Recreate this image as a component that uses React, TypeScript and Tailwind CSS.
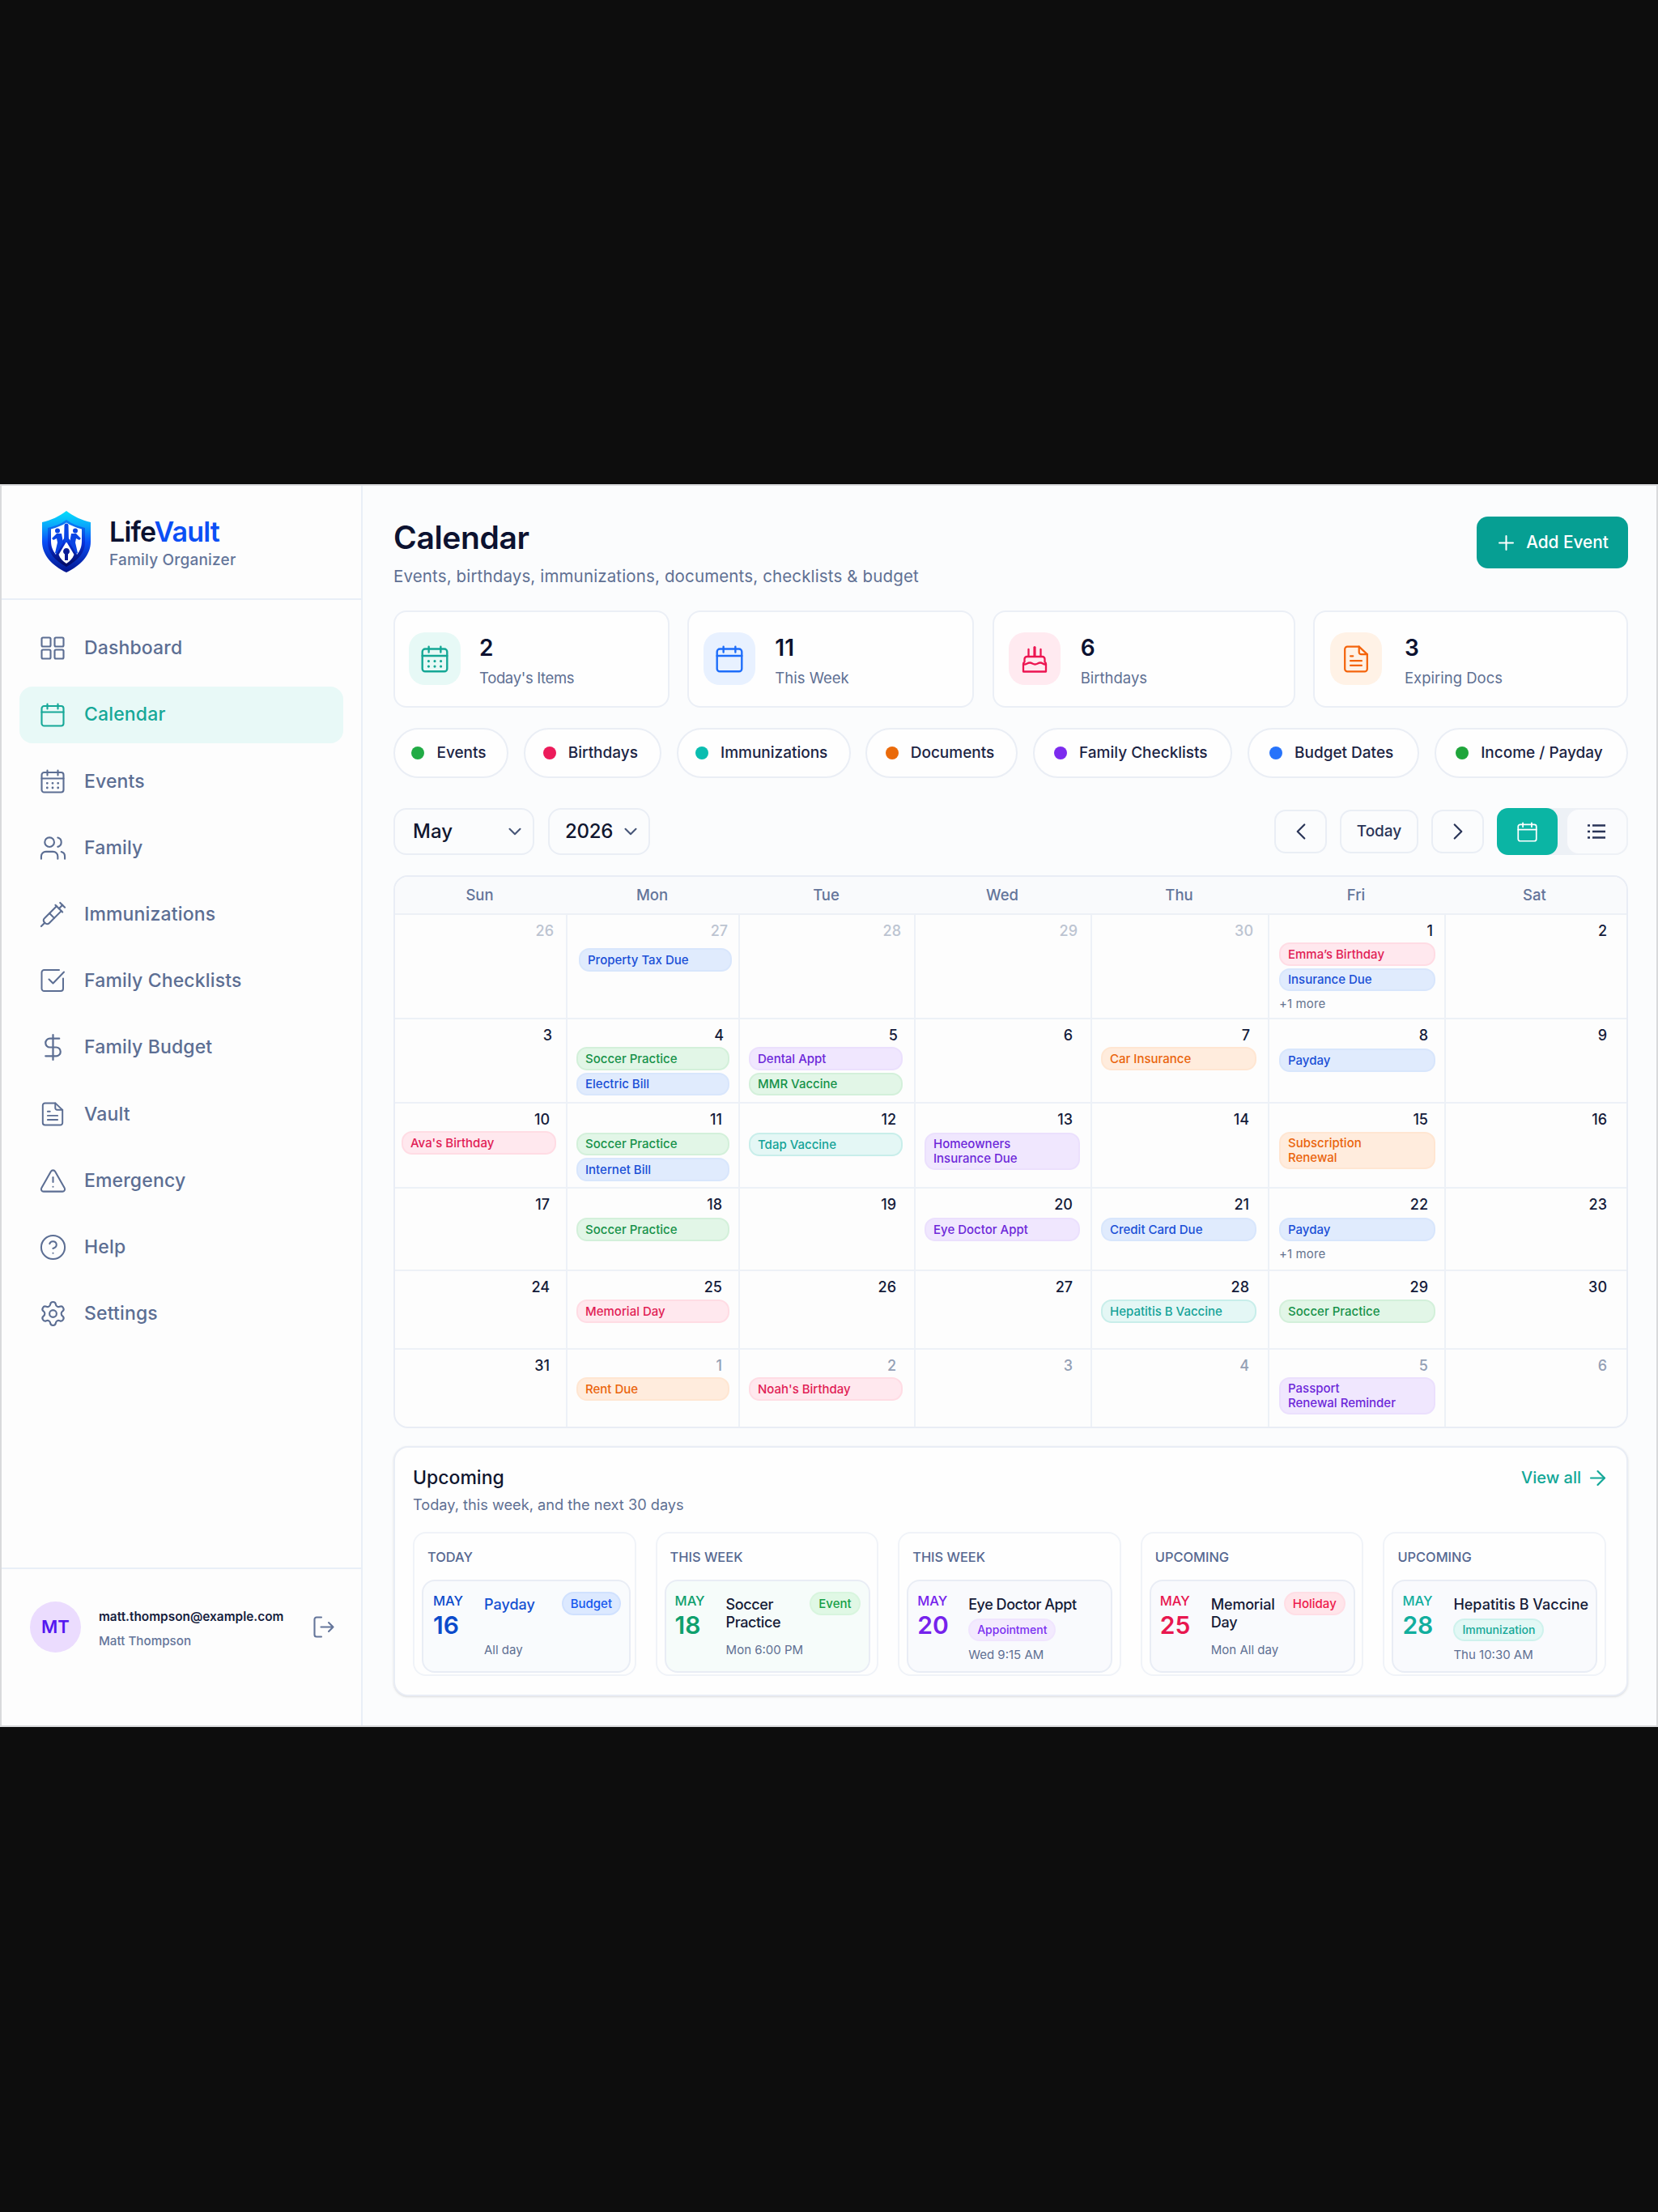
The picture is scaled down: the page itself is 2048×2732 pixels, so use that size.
import type { ReactNode } from 'react';
import {
  ArrowRight,
  ChevronDown,
  ChevronLeft,
  ChevronRight,
  CircleHelp,
  DollarSign,
  Plus,
  Settings,
  Syringe,
  TriangleAlert,
  Users,
} from 'lucide-react';

type Tone = 'blue' | 'green' | 'purple' | 'red' | 'orange' | 'teal';

const chipTones: Record<Tone, string> = {
  blue: 'bg-[#e0ebfd] border-[#d8e6fc] text-[#1a4fd6]',
  green: 'bg-[#e2f6e7] border-[#d3f0da] text-[#17924a]',
  purple: 'bg-[#f0e7fe] border-[#ebe0fd] text-[#6d28d9]',
  red: 'bg-[#ffe8ee] border-[#ffdce4] text-[#e11d55]',
  orange: 'bg-[#ffecdd] border-[#ffe6d2] text-[#ea640c]',
  teal: 'bg-[#e4f7f5] border-[#c8eeea] text-[#14a398]',
};

function CalendarGlyph({ className, dots = false }: { className?: string; dots?: boolean }) {
  return (
    <svg viewBox="0 0 30 30" fill="none" stroke="currentColor" strokeWidth="2.1" strokeLinecap="round" className={className}>
      <rect x="1.5" y="4" width="27" height="24.5" rx="3" />
      <path d="M1.5 11.5h27M8.5 1.5v6M21.5 1.5v6" />
      {dots && <path strokeWidth="2.8" d="M8.3 17.3h.01M15 17.3h.01M21.7 17.3h.01M8.3 23h.01M15 23h.01M21.7 23h.01" />}
    </svg>
  );
}

function GridGlyph({ className }: { className?: string }) {
  return (
    <svg viewBox="0 0 30 30" fill="none" stroke="currentColor" strokeWidth="2.1" className={className}>
      <rect x="1.5" y="1.5" width="11" height="11" rx="1.5" />
      <rect x="17.5" y="1.5" width="11" height="11" rx="1.5" />
      <rect x="1.5" y="16.5" width="11" height="11" rx="1.5" />
      <rect x="17.5" y="16.5" width="11" height="11" rx="1.5" />
    </svg>
  );
}

function CheckGlyph({ className }: { className?: string }) {
  return (
    <svg viewBox="0 0 30 30" fill="none" stroke="currentColor" strokeWidth="2" strokeLinecap="round" strokeLinejoin="round" className={className}>
      <path d="M23 2H4.5a3 3 0 0 0-3 3v20a3 3 0 0 0 3 3H25a3 3 0 0 0 3-3V12.5" />
      <path d="M10.500 13.5l5 5L29 4.5" />
    </svg>
  );
}

function DocGlyph({ className }: { className?: string }) {
  return (
    <svg viewBox="0 0 30 32" fill="none" stroke="currentColor" strokeWidth="2.1" strokeLinecap="round" strokeLinejoin="round" className={className}>
      <path d="M18.5 1.5H5a3 3 0 0 0-3 3v23a3 3 0 0 0 3 3h20a3 3 0 0 0 3-3V10.5z" />
      <path d="M18.5 1.5V8a2.5 2.5 0 0 0 2.5 2.5h7" />
      <path d="M8.5 12.5h3M8.5 18h13M8.5 23.5h13" />
    </svg>
  );
}

function CakeGlyph({ className }: { className?: string }) {
  return (
    <svg viewBox="0 0 32 34" fill="none" stroke="currentColor" strokeWidth="2.3" strokeLinecap="round" strokeLinejoin="round" className={className}>
      <path d="M2 32.5V23a3 3 0 0 1 1.5-2.6V17a3 3 0 0 1 3-3h19a3 3 0 0 1 3 3v3.4A3 3 0 0 1 30 23v9.5z" />
      <path d="M3 23.5c3.500 0 4-2 7-2s3.500 2 6.500 2 3.500-2 6.500-2 3 2 6 2" />
      <path strokeWidth="3.2" d="M16 2.5V13" />
      <path d="M8.500 5v8.500M23.500 5v8.500" />
    </svg>
  );
}

function LogoutGlyph({ className }: { className?: string }) {
  return (
    <svg viewBox="0 0 26 27" fill="none" stroke="currentColor" strokeWidth="2.1" strokeLinecap="round" strokeLinejoin="round" className={className}>
      <path d="M10 1.5H4A2.5 2.5 0 0 0 1.5 4v19A2.5 2.5 0 0 0 4 25.5h6M9.5 13.5h15M19 8l5.5 5.5L19 19" />
    </svg>
  );
}

function ListGlyph({ className }: { className?: string }) {
  return (
    <svg viewBox="0 0 24 20" fill="none" stroke="currentColor" strokeWidth="2.6" className={className}>
      <path d="M1 2.5h3M7 2.5h16M1 10h3M7 10h16M1 17.5h3M7 17.5h16" />
    </svg>
  );
}

function Logo() {
  return (
    <svg viewBox="0 0 62 78" className="h-[78px] w-[62px]">
      <defs>
        <linearGradient id="shield" x1="0" y1="0" x2="0" y2="1">
          <stop offset="0" stopColor="#06e0fb" />
          <stop offset="0.25" stopColor="#0aa5fb" />
          <stop offset="0.5" stopColor="#0a50f8" />
          <stop offset="1" stopColor="#04148c" />
        </linearGradient>
        <linearGradient id="shieldInner" x1="0" y1="0" x2="0" y2="1">
          <stop offset="0" stopColor="#0a86f8" />
          <stop offset="0.5" stopColor="#0830d8" />
          <stop offset="1" stopColor="#03085c" />
        </linearGradient>
      </defs>
      <path d="M31 1C22 8 12 12.5 1 15v24c0 17 13 30 30 38 17-8 30-21 30-38V15C50 12.5 40 8 31 1z" fill="url(#shield)" />
      <path d="M31 12C24 17 17 20 8 22v18c0 13 9 22 23 30 14-8 23-17 23-30V22C45 20 38 17 31 12z" fill="url(#shieldInner)" />
      {/* White field with the three figures cut into it */}
      <path d="M31 15.5c-5 3.5-12 6-19 8V38c0 7 2 12 6 17l6.5-15L31 31l6.5 9L44 55c4-5 6-10 6-17V23.500c-7-2-14-4.500-19-8z" fill="#fff" />
      <path d="M31 39l9.5 16c-2 5-5 8-9.5 11-4.5-3-7.5-6-9.5-11z" fill="#fff" />
      <g fill="#0a45e4">
        <circle cx="20" cy="25.5" r="3" />
        <circle cx="42" cy="25.5" r="3" />
        <path d="M28.5 19a2.5 2.5 0 0 1 5 0L34 40h-6z" />
        <path d="M13 35l6-6 6 0 2 11-8 14-2-1 3-13-1-5-4 2z" />
        <path d="M49 35l-6-6-6 0-2 11 8 14 2-1-3-13 1-5 4 2z" />
      </g>
      <path d="M31 47a4 4 0 0 1 2 7.4V62h-4v-7.6A4 4 0 0 1 31 47z" fill="#081a94" />
    </svg>
  );
}

const iconSize = 'h-[30px] w-[30px]';
const lucideSize = '-mx-[2.5px] h-[35px] w-[35px]';

const navItems: { label: string; icon: ReactNode; active?: boolean }[] = [
  { label: 'Dashboard', icon: <GridGlyph className={iconSize} /> },
  { label: 'Calendar', icon: <CalendarGlyph className={iconSize} />, active: true },
  { label: 'Events', icon: <CalendarGlyph dots className={iconSize} /> },
  { label: 'Family', icon: <Users className={lucideSize} strokeWidth={1.45} /> },
  { label: 'Immunizations', icon: <Syringe className={lucideSize} strokeWidth={1.45} /> },
  { label: 'Family Checklists', icon: <CheckGlyph className={iconSize} /> },
  { label: 'Family Budget', icon: <DollarSign className="-mx-[3.5px] h-[37px] w-[37px]" strokeWidth={1.45} /> },
  { label: 'Vault', icon: <DocGlyph className={iconSize} /> },
  { label: 'Emergency', icon: <TriangleAlert className={lucideSize} strokeWidth={1.4} /> },
  { label: 'Help', icon: <CircleHelp className={lucideSize} strokeWidth={1.4} /> },
  { label: 'Settings', icon: <Settings className={lucideSize} strokeWidth={1.45} /> },
];

function Sidebar() {
  return (
    <aside className="flex w-[446px] shrink-0 flex-col border-r-2 border-[#e9eff7] bg-[#fdfdfd]">
      <div className="flex h-[141px] shrink-0 items-start gap-[22px] border-b-2 border-[#e9eff7] pt-[30px] pl-[49px]">
        <Logo />
        <div className="pt-[7px]">
          <div className="text-[34px] leading-[40px] font-semibold tracking-[-0.8px] text-[#0b1130]">
            Life<span className="text-[#0b4ff5]">Vault</span>
          </div>
          <div className="mt-px text-[19px] leading-[28px] font-medium tracking-[0.2px] text-[#64759a]">Family Organizer</div>
        </div>
      </div>

      <nav className="flex flex-1 flex-col gap-[12.2px] pt-[24.5px] pr-[22px] pl-[22px]">
        {navItems.map((item) => (
          <a
            key={item.label}
            className={`flex h-[70px] items-center gap-[24px] rounded-[16px] pl-[26px] text-[23px] font-medium tracking-[0.15px] ${
              item.active ? 'bg-[#e8f9f7] text-[#16a898]' : 'text-[#5c6e93]'
            }`}
          >
            {item.icon}
            {item.label}
          </a>
        ))}
      </nav>

      <div className="flex h-[195px] shrink-0 items-start border-t-2 border-[#e9eff7] pt-[40px] pl-[35px]">
        <div className="flex h-[63px] w-[63px] shrink-0 items-center justify-center rounded-full bg-[#ebdcfe] text-[22px] font-semibold text-[#5417f0]">
          MT
        </div>
        <div className="w-[287px] shrink-0 pt-[9px] pl-[22px]">
          <div className="text-[15.4px] leading-[20px] font-semibold whitespace-nowrap text-[#161d3d]">matt.thompson@example.com</div>
          <div className="mt-[10px] text-[15.2px] leading-[20px] font-medium text-[#64759a]">Matt Thompson</div>
        </div>
        <LogoutGlyph className="mt-[18px] h-[27px] w-[26px] text-[#64759a]" />
      </div>
    </aside>
  );
}

const stats = [
  { value: '2', label: "Today's Items", box: 'w-[341px] gap-[23px] pl-[17px] tracking-[-0.35px]', tile: 'bg-[#e7f9f6] text-[#14a795]', icon: <CalendarGlyph dots className="h-[34px] w-[34px]" /> },
  { value: '11', label: 'This Week', box: 'w-[354px] gap-[24px] pl-[18px]', tile: 'bg-[#e8f1ff] text-[#1d6dfa]', icon: <CalendarGlyph className="h-[34px] w-[34px]" /> },
  { value: '6', label: 'Birthdays', box: 'w-[374px] gap-[25px] pl-[18px]', tile: 'bg-[#ffeaf0] text-[#ec1551]', icon: <CakeGlyph className="h-[34px] w-[32px]" /> },
  { value: '3', label: 'Expiring Docs', box: 'w-[389px] gap-[28px] pl-[19px]', tile: 'bg-[#fff2e6] text-[#f4640c]', icon: <DocGlyph className="h-[34px] w-[32px]" /> },
];

const filters = [
  { label: 'Events', dot: 'bg-[#21ab45]', w: 'w-[142px]' },
  { label: 'Birthdays', dot: 'bg-[#ec1b5a]', w: 'w-[170px]' },
  { label: 'Immunizations', dot: 'bg-[#0abdb0]', w: 'w-[215px]' },
  { label: 'Documents', dot: 'bg-[#ea6a0a]', w: 'w-[188px]' },
  { label: 'Family Checklists', dot: 'bg-[#7c2bee]', w: 'w-[246px]' },
  { label: 'Budget Dates', dot: 'bg-[#2673fb]', w: 'w-[212px]' },
  { label: 'Income / Payday', dot: 'bg-[#1fa53b]', w: 'w-[239px]' },
];

// Right padding of the day number: first week, second week, the others
const columns = [
  { day: 'Sun', pl: 'pl-2', num: ['pr-[15px]', 'pr-[17px]', 'pr-5'], chip: 'w-[191px]' },
  { day: 'Mon', pl: 'pl-[11px]', num: ['pr-[13px]', 'pr-[18px]', 'pr-5'], chip: 'w-[189px]' },
  { day: 'Tue', pl: 'pl-[11px]', num: ['pr-4', 'pr-[20px]', 'pr-[22px]'], chip: 'w-[190px]' },
  { day: 'Wed', pl: 'pl-[11px]', num: ['pr-4', 'pr-[22px]', 'pr-[22px]'], chip: 'w-[192px]' },
  { day: 'Thu', pl: 'pl-[11px]', num: ['pr-[18px]', 'pr-[22px]', 'pr-[23px]'], chip: 'w-[192px]' },
  { day: 'Fri', pl: 'pl-3', num: ['pr-[14px]', 'pr-5', 'pr-5'], chip: 'w-[193px]' },
  { day: 'Sat', pl: 'pl-3', num: ['pr-[24px]', 'pr-6', 'pr-6'], chip: 'w-[193px]' },
];

type Chip = [label: string, tone: Tone];
type Day = { n: number; muted?: boolean; chips?: Chip[]; more?: string; offset?: string };

const weeks: { height: string; days: Day[] }[] = [
  {
    height: 'h-[129px]',
    days: [
      { n: 26, muted: true },
      { n: 27, muted: true, chips: [['Property Tax Due', 'blue']], offset: 'pt-[11px] pl-[3px]' },
      { n: 28, muted: true },
      { n: 29, muted: true },
      { n: 30, muted: true },
      { n: 1, chips: [['Emma’s Birthday', 'red'], ['Insurance Due', 'blue']], more: '+1 more', offset: 'pt-1' },
      { n: 2 },
    ],
  },
  {
    height: 'h-[104px]',
    days: [
      { n: 3 },
      { n: 4, chips: [['Soccer Practice', 'green'], ['Electric Bill', 'blue']], offset: 'pt-1' },
      { n: 5, chips: [['Dental Appt', 'purple'], ['MMR Vaccine', 'green']], offset: 'pt-1' },
      { n: 6 },
      { n: 7, chips: [['Car Insurance', 'orange']], offset: 'pt-1' },
      { n: 8, chips: [['Payday', 'blue']], offset: 'pt-1.5' },
      { n: 9 },
    ],
  },
  {
    height: 'h-[105px]',
    days: [
      { n: 10, chips: [["Ava's Birthday", 'red']], offset: 'pt-1' },
      { n: 11, chips: [['Soccer Practice', 'green'], ['Internet Bill', 'blue']], offset: 'pt-[5.5px]' },
      { n: 12, chips: [['Tdap Vaccine', 'teal']], offset: 'pt-1.5' },
      { n: 13, chips: [['Homeowners\nInsurance Due', 'purple']], offset: 'pt-1.5' },
      { n: 14 },
      { n: 15, chips: [['Subscription\nRenewal', 'orange']], offset: 'pt-[5px]' },
      { n: 16 },
    ],
  },
  {
    height: 'h-[102px]',
    days: [
      { n: 17 },
      { n: 18, chips: [['Soccer Practice', 'green']], offset: 'pt-1.5' },
      { n: 19 },
      { n: 20, chips: [['Eye Doctor Appt', 'purple']], offset: 'pt-1.5' },
      { n: 21, chips: [['Credit Card Due', 'blue']], offset: 'pt-1.5' },
      { n: 22, chips: [['Payday', 'blue']], more: '+1 more', offset: 'pt-1.5' },
      { n: 23 },
    ],
  },
  {
    height: 'h-[97px]',
    days: [
      { n: 24 },
      { n: 25, chips: [['Memorial Day', 'red']], offset: 'pt-[5px]' },
      { n: 26 },
      { n: 27 },
      { n: 28, chips: [['Hepatitis B Vaccine', 'teal']], offset: 'pt-[5px]' },
      { n: 29, chips: [['Soccer Practice', 'green']], offset: 'pt-[5px]' },
      { n: 30 },
    ],
  },
  {
    height: 'h-[95px]',
    days: [
      { n: 31 },
      { n: 1, muted: true, chips: [['Rent Due', 'orange']], offset: 'pt-1' },
      { n: 2, muted: true, chips: [["Noah's Birthday", 'red']], offset: 'pt-1' },
      { n: 3, muted: true },
      { n: 4, muted: true },
      { n: 5, muted: true, chips: [['Passport\nRenewal Reminder', 'purple']], offset: 'pt-1' },
      { n: 6, muted: true },
    ],
  },
];

const gridCols = 'grid grid-cols-[213px_213px_217px_218px_219px_218px_223px]';

function MonthGrid() {
  return (
    <section className="mt-[25px] h-[683px] shrink-0 overflow-hidden rounded-[18px] border-2 border-[#e9edf5] bg-[#fdfdfd]">
      <div className={`${gridCols} h-[47px] border-b-2 border-[#edf0f6] bg-[#f9fafc]`}>
        {columns.map((col) => (
          <div key={col.day} className="pr-[4px] text-center text-[18.5px] leading-[45px] font-medium text-[#64759a]">
            {col.day}
          </div>
        ))}
      </div>
      {weeks.map((week, row) => (
        <div key={row} className={`${gridCols} ${week.height}`}>
          {week.days.map((day, i) => {
            const col = columns[i];
            const muted = row === 0 ? 'text-[#bcc4d1]' : 'text-[#94a0b5]';
            return (
              <div
                key={i}
                className={`border-[#edf1f7] pt-[10px] ${i < 6 ? 'border-r-2' : ''} ${row < 5 ? 'border-b-2' : ''}`}
              >
                <div
                  className={`text-right text-[18px] leading-5 font-medium ${col.num[Math.min(row, 2)]} ${
                    day.muted ? muted : 'text-[#141b3a]'
                  }`}
                >
                  {day.n}
                </div>
                {day.chips && (
                  <div className={col.pl}>
                    <div className={`flex flex-col gap-[3px] ${day.offset ?? ''}`}>
                      {day.chips.map(([label, tone]) => (
                        <div
                          key={label}
                          className={`rounded-[13px] border-2 pl-[9px] text-[15px] leading-[18px] font-medium whitespace-pre ${
                            label.includes('\n') ? 'h-[46px] pt-[3px]' : 'h-[28.5px] pt-[3.5px]'
                          } ${col.chip} ${chipTones[tone]}`}
                        >
                          {label}
                        </div>
                      ))}
                      {day.more && <div className="pt-[3px] text-[15px] leading-5 tracking-[0.1px] text-[#66748f]">{day.more}</div>}
                    </div>
                  </div>
                )}
              </div>
            );
          })}
        </div>
      ))}
    </section>
  );
}

const upcoming: {
  group: string;
  day: string;
  title: string;
  titleTone?: string;
  time: string;
  tag: string;
  tone: Tone;
  dateTone: string;
  box?: string;
  stacked?: boolean;
}[] = [
  { group: 'TODAY', day: '16', title: 'Payday', titleTone: 'text-[#1450d2]', time: 'All day', tag: 'Budget', tone: 'blue', dateTone: 'text-[#0c4bcb]', box: 'w-[258px] pl-3 bg-[#f9fbfd]' },
  { group: 'THIS WEEK', day: '18', title: 'Soccer\nPractice', titleTone: 'text-[#151b37] tracking-[-0.4px]', time: 'Mon 6:00 PM', tag: 'Event', tone: 'green', dateTone: 'text-[#0fa06d]', box: 'w-[254px] pl-[11px] bg-[#f6fcfa]' },
  { group: 'THIS WEEK', day: '20', title: 'Eye Doctor Appt', titleTone: 'text-[#151b37] tracking-[-0.45px]', time: 'Wed 9:15 AM', tag: 'Appointment', tone: 'purple', dateTone: 'text-[#7622ec]', stacked: true },
  { group: 'UPCOMING', day: '25', title: 'Memorial\nDay', titleTone: 'text-[#151b37] tracking-[-0.2px]', time: 'Mon All day', tag: 'Holiday', tone: 'red', dateTone: 'text-[#e8174f]' },
  { group: 'UPCOMING', day: '28', title: 'Hepatitis B Vaccine', time: 'Thu 10:30 AM', tag: 'Immunization', tone: 'teal', dateTone: 'text-[#12ae9e]', stacked: true },
];

const tagTones: Record<Tone, string> = {
  blue: 'bg-[#dce9ff] border-[#d0e1fe] text-[#1557ee]',
  green: 'bg-[#e0f8e5] border-[#d8f5de] text-[#17a047]',
  purple: 'bg-[#f3eafe] border-[#f0e5fe] text-[#7a2ff0]',
  red: 'bg-[#ffe5ea] border-[#ffdee5] text-[#ee1a4b]',
  orange: 'bg-[#ffecdd] border-[#ffe2cb] text-[#ea640c]',
  teal: 'bg-[#e2f8f5] border-[#cff2ed] text-[#14a797]',
};

function Upcoming() {
  return (
    <section className="mt-[22px] h-[309px] shrink-0 rounded-[18px] border-2 border-[#e9edf5] bg-[#fefefe] pt-[22px] pr-[25px] pl-[22px] shadow-sm">
      <div className="flex items-start justify-between">
        <div>
          <h2 className="text-[23px] leading-[30px] font-medium text-[#10162f]">Upcoming</h2>
          <p className="mt-[5px] text-[18.2px] leading-[27px] text-[#5f7093]">Today, this week, and the next 30 days</p>
        </div>
        <a className="-mr-[4px] flex items-center gap-[6px] text-[20px] leading-[30px] font-medium text-[#12a797]">
          View all
          <ArrowRight className="h-[29px] w-[29px]" strokeWidth={1.8} />
        </a>
      </div>

      <div className="mt-[20px] grid grid-cols-5 gap-[24px]">
        {upcoming.map((item) => (
          <div key={item.day} className="h-[178px] rounded-[16px] border-2 border-[#f0f3f8] pt-[19px] pl-[9px]">
            <div className="pl-[7px] text-[16.4px] leading-[20px] font-medium text-[#566891]">{item.group}</div>
            <div className={`mt-[18px] flex h-[115px] rounded-[16px] border-2 border-[#e9edf5] pt-[14px] ${item.box ?? 'w-[254px] pl-[11px] bg-[#f9fafd]'}`}>
              <div className={`w-[63px] shrink-0 ${item.dateTone}`}>
                <div className="text-[16.5px] leading-[20px] font-medium">MAY</div>
                <div className="mt-[3px] text-[30px] leading-[34px] font-semibold">{item.day}</div>
              </div>
              <div className="flex min-w-0 flex-1 flex-col">
                {item.stacked ? (
                  <>
                    <div className={`mt-[4px] text-[18px] leading-[22px] font-medium whitespace-nowrap ${item.titleTone ?? 'text-[#151b37]'}`}>{item.title}</div>
                    <div className={`mt-[6px] h-[28px] self-start rounded-full border-2 px-[9px] text-[14px] leading-[23px] font-medium ${tagTones[item.tone]}`}>
                      {item.tag}
                    </div>
                    <div className="mt-[7px] text-[15px] leading-[20px] text-[#5f7093]">{item.time}</div>
                  </>
                ) : (
                  <>
                    <div className="flex h-[61px] items-start justify-between pr-[10px]">
                      <div className={`mt-[4px] text-[18px] leading-[22px] font-medium whitespace-pre ${item.titleTone ?? 'text-[#151b37]'}`}>{item.title}</div>
                      <div className={`-mt-px h-[29px] rounded-full border-2 px-[9px] text-[15px] leading-[25px] font-medium ${tagTones[item.tone]}`}>{item.tag}</div>
                    </div>
                    <div className="text-[15px] leading-[20px] text-[#5f7093]">{item.time}</div>
                  </>
                )}
              </div>
            </div>
          </div>
        ))}
      </div>
    </section>
  );
}

export default function App() {
  return (
    <div className="min-h-[2732px] bg-[#0d0d0d] py-[598px] font-[Inter,'Liberation_Sans',sans-serif]">
      <div className="flex h-[1535px] w-[2048px] overflow-hidden border-2 border-[#d9dadc] bg-[#fbfcfd]">
        <Sidebar />

        <main className="flex flex-1 flex-col pr-[35px] pl-[38px]">
          {/* Page header */}
          <header className="flex h-[154px] shrink-0 items-start justify-between">
            <div className="pt-[40px]">
              <h1 className="text-[39px] leading-[48px] font-semibold tracking-[-0.35px] text-[#0c1230]">Calendar</h1>
              <p className="mt-[10px] text-[20.5px] leading-[28px] tracking-[0.14px] text-[#5f7093]">
                Events, birthdays, immunizations, documents, checklists &amp; budget
              </p>
            </div>
            <button className="mt-[38px] flex h-[64px] w-[187px] items-center justify-center gap-[10px] rounded-[14px] bg-[#069f93] pr-[2px] text-[20.8px] font-medium text-white">
              <Plus className="h-[29px] w-[29px]" strokeWidth={1.7} />
              Add Event
            </button>
          </header>

          {/* Stat cards */}
          <div className="flex shrink-0 justify-between">
            {stats.map((stat) => (
              <div key={stat.label} className={`flex h-[120px] items-start rounded-[16px] border-2 border-[#ebeff6] bg-[#fefefe] pt-[25px] ${stat.box}`}>
                <div className={`flex h-[65px] w-[64px] items-center justify-center rounded-[20px] ${stat.tile}`}>{stat.icon}</div>
                <div className="pt-px">
                  <div className="text-[28px] leading-[36px] font-semibold text-[#0c1230]">{stat.value}</div>
                  <div className="mt-[6px] text-[18.5px] leading-[26px] text-[#5f7093]">{stat.label}</div>
                </div>
              </div>
            ))}
          </div>

          {/* Category filters */}
          <div className="mt-[25px] flex shrink-0 justify-between">
            {filters.map((f) => (
              <div key={f.label} className={`flex h-[62px] items-center justify-center gap-[15px] rounded-full border-2 border-[#eaeef5] bg-[#fefefe] pr-[5px] text-[19px] font-medium whitespace-nowrap text-[#1c2444] ${f.w}`}>
                <span className={`h-4 w-4 rounded-full ${f.dot}`} />
                {f.label}
              </div>
            ))}
          </div>

          {/* Toolbar */}
          <div className="mt-[37px] flex h-[58px] shrink-0 items-center justify-between">
            <div className="flex gap-[17px] text-[24px] font-medium text-[#10162f]">
              <div className="flex h-[58px] w-[174px] items-center justify-between rounded-[16px] border-2 border-[#eaeef5] pr-[9px] pl-[22px]">
                May
                <ChevronDown className="h-[26px] w-[26px] text-[#475678]" strokeWidth={1.9} />
              </div>
              <div className="flex h-[58px] w-[126px] items-center justify-between rounded-[16px] border-2 border-[#eaeef5] pr-[9px] pl-[19px] tracking-[-0.3px]">
                2026
                <ChevronDown className="h-[26px] w-[26px] text-[#475678]" strokeWidth={1.9} />
              </div>
            </div>
            <div className="flex items-center gap-[16px] text-[#2a3558]">
              <button className="flex h-[54px] w-[65px] items-center justify-center rounded-[14px] border-2 border-[#eaeef5]">
                <ChevronLeft className="h-[34px] w-[34px]" strokeWidth={1.6} />
              </button>
              <button className="h-[54px] w-[97px] rounded-[14px] border-2 border-[#eaeef5] text-[19px] font-medium">Today</button>
              <button className="flex h-[54px] w-[65px] items-center justify-center rounded-[14px] border-2 border-[#eaeef5]">
                <ChevronRight className="h-[34px] w-[34px]" strokeWidth={1.6} />
              </button>
              <div className="flex h-[58px] w-[162px] justify-between rounded-[16px] bg-[#edf1f6]">
                <button className="flex w-[75px] items-center justify-center rounded-[14px] bg-[#0bb5a4] text-white">
                  <CalendarGlyph className="h-[25px] w-[25px]" />
                </button>
                <button className="flex w-[77px] items-center justify-center rounded-[16px] border-2 border-[#eef1f6] bg-[#fafbfd] pr-[2px]">
                  <ListGlyph className="h-[20px] w-[24px]" />
                </button>
              </div>
            </div>
          </div>

          <MonthGrid />
          <Upcoming />
        </main>
      </div>
    </div>
  );
}
